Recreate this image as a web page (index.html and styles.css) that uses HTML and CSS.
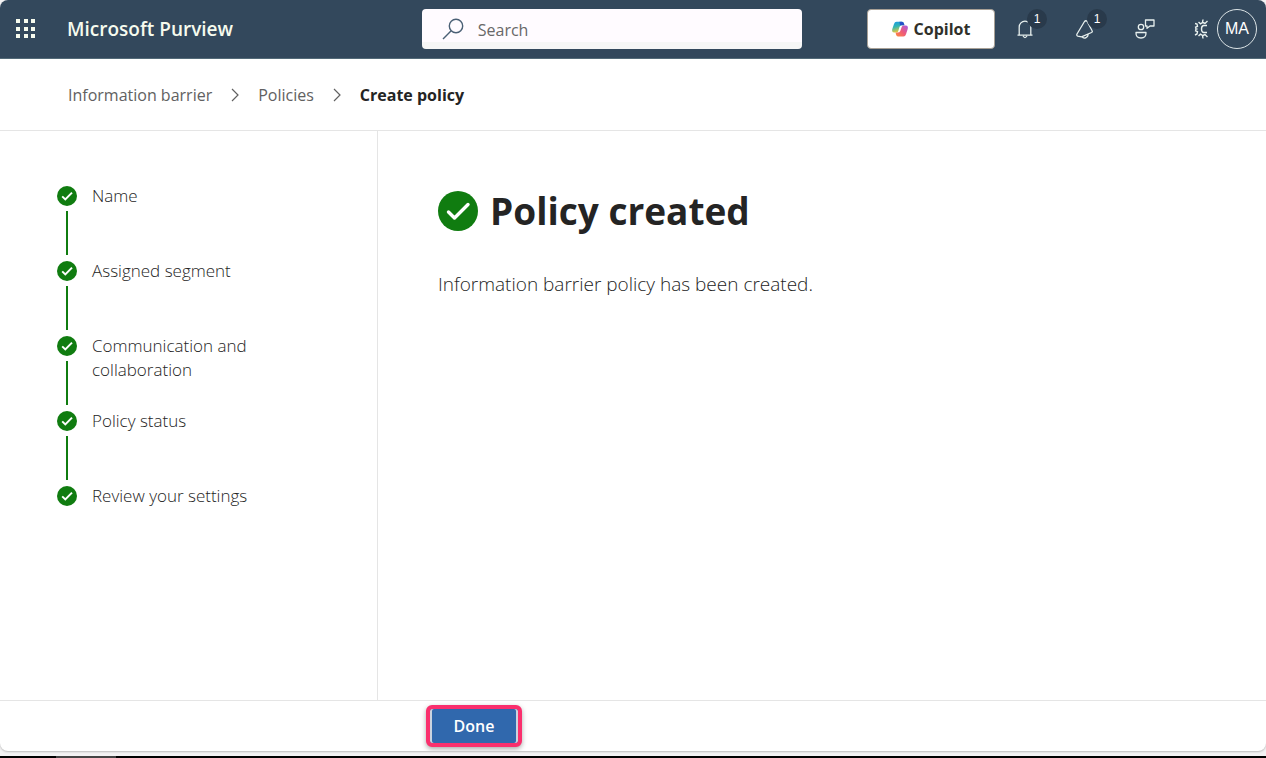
FILE: index.html
```html
<!DOCTYPE html>
<html lang="en">
<head>
<meta charset="utf-8">
<meta name="viewport" content="width=device-width, initial-scale=1">
<title>Create policy - Microsoft Purview</title>
<link rel="stylesheet" href="styles.css">
</head>
<body>
<svg class="defs" aria-hidden="true">
  <symbol id="check" viewBox="0 0 20 20">
    <circle cx="10" cy="10" r="10" fill="#107c10"/>
    <path d="M5.2 10.400 8.300 13.400 15 6.600" fill="none" stroke="#fff" stroke-width="2"/>
  </symbol>
  <symbol id="chevron" viewBox="0 0 8 14">
    <path d="M1 1 7 7 1 13" fill="none" stroke="#616161" stroke-width="1.200"/>
  </symbol>
</svg>
<div class="window">
  <header class="topbar">
    <div class="brand">
      <button class="icon-button" type="button" aria-label="App launcher">
        <svg width="20" height="20" viewBox="0 0 20 20" fill="#f6fbee">
          <path d="M0 0h4v4H0zM8 0h4v4H8zM15 0h4v4h-4zM0 8h4v4H0zM8 8h4v4H8zM15 8h4v4h-4zM0 15h4v4H0zM8 15h4v4H8zM15 15h4v4h-4z"/>
        </svg>
      </button>
      <a class="product" href="#">Microsoft Purview</a>
    </div>
    <label class="search">
      <svg width="22" height="22" viewBox="0 0 22 22" fill="none" stroke="#4a6075" stroke-width="1.400" aria-hidden="true">
        <circle cx="14" cy="8" r="6.700"/><path d="M9.200 12.800 1 21"/>
      </svg>
      <input type="search" placeholder="Search" aria-label="Search">
    </label>
    <div class="actions">
      <button class="copilot" type="button">
        <svg width="16" height="16" viewBox="0 0 16 16" aria-hidden="true">
          <defs>
            <linearGradient id="cool" x1="0" y1="0" x2="0.3" y2="1"><stop offset="0" stop-color="#1697e8"/><stop offset=".5" stop-color="#35b7b0"/><stop offset="1" stop-color="#e9c83a"/></linearGradient>
            <linearGradient id="warm" x1="1" y1="0" x2="0" y2="1"><stop offset="0" stop-color="#a35be8"/><stop offset=".5" stop-color="#ee5a79"/><stop offset="1" stop-color="#ff8a3c"/></linearGradient>
          </defs>
          <path d="M4.500 .8H10q1.500 0 2 2l.4 1.500H9.500Q8 4.300 7.500 6L6.300 10Q5.900 11.500 4.500 11.500H2Q-.5 11.500.3 8L2 3Q2.700.8 4.500.8Z" fill="url(#cool)"/>
          <path d="M7.500 .8H10q1.500 0 2 2l.4 1.500H9.500L8 4.600Z" fill="#2450c9"/>
          <path d="M11.500 15.500H6q-1.500 0-2-2l-.4-2H5Q7.600 11.700 8.300 10L9.700 6Q10.100 4.500 11.500 4.500H14q2.500 0 1.700 3.500L14 13.300q-.7 2.200-2.500 2.200Z" fill="url(#warm)"/>
        </svg>
        Copilot
      </button>
      <button class="icon-button badged" type="button" aria-label="Notifications, 1 new">
        <svg width="16" height="20" viewBox="0 0 16 20" fill="none" stroke="#e8f0ee" stroke-width="1.300">
          <path d="M.5 16.200H15.500M2.200 16V8a5.800 5.800 0 0 1 11.600 0v8M6 17q2 3 4 0"/>
        </svg>
        <span class="badge">1</span>
      </button>
      <button class="icon-button badged" type="button" aria-label="Announcements, 1 new">
        <svg width="18" height="20" viewBox="0 0 18 20" fill="none" stroke="#e8f0ee" stroke-width="1.300" stroke-linejoin="round">
          <path d="M8.500 2.500 1 15q-.7 1.600.8 2.200l3.700.6L15.500 13.500q1.300-.8.500-2L11 2.200q-1.300-1-2.500.3ZM6 17.700q1.500 2.200 4 1t2-3.700"/>
        </svg>
        <span class="badge">1</span>
      </button>
      <button class="icon-button" type="button" aria-label="Feedback">
        <svg width="20" height="20" viewBox="0 0 20 20" fill="none" stroke="#e8f0ee" stroke-width="1.300">
          <circle cx="6" cy="8" r="2.700"/><path d="M1 13.500h10q.3 5.500-5 5.500t-5-5.500ZM10.500 1h8.500v6h-4l-3 2.300V7h-1.500Z" stroke-linejoin="round"/>
        </svg>
      </button>
      <button class="icon-button settings" type="button" aria-label="Settings">
        <svg width="14" height="22" viewBox="0 0 14 22" fill="none" stroke="#e8f0ee" stroke-width="1.400">
          <path d="M1 5.500 3 6 3.500 8.300 1 9.500M1 12.500 3.500 13.700 3 16 1 17M4.500 4 6.500 5.800 8.500 4.500 9 1.500M4.500 18 6.500 16.200 8.500 17.500 9 20.500M9 4.500 11 5.500 13.500 3M9 17.500 11 16.500 13.500 19M13 7.500H9.500Q7.500 8 7.500 11T9.500 14.500H13M3.500 11H1"/>
        </svg>
      </button>
      <button class="avatar" type="button" aria-label="Account MA">MA</button>
    </div>
  </header>
  <nav class="breadcrumb" aria-label="Breadcrumb">
    <a href="#">Information barrier</a>
    <svg width="8" height="14" aria-hidden="true"><use href="#chevron"/></svg>
    <a href="#">Policies</a>
    <svg width="8" height="14" aria-hidden="true"><use href="#chevron"/></svg>
    <span class="current" aria-current="page">Create policy</span>
  </nav>
  <div class="wizard">
    <ol class="steps">
      <li class="step"><svg class="step-icon" aria-hidden="true"><use href="#check"/></svg><span>Name</span></li>
      <li class="step"><svg class="step-icon" aria-hidden="true"><use href="#check"/></svg><span>Assigned segment</span></li>
      <li class="step"><svg class="step-icon" aria-hidden="true"><use href="#check"/></svg><span>Communication and collaboration</span></li>
      <li class="step"><svg class="step-icon" aria-hidden="true"><use href="#check"/></svg><span>Policy status</span></li>
      <li class="step"><svg class="step-icon" aria-hidden="true"><use href="#check"/></svg><span>Review your settings</span></li>
    </ol>
    <main class="result">
      <div class="result-heading">
        <svg width="40" height="40" viewBox="0 0 40 40" aria-hidden="true">
          <circle cx="20" cy="20" r="20" fill="#107c10"/>
          <path d="M10.500 21 16.500 27 30 13.500" fill="none" stroke="#fff" stroke-width="3.400" stroke-linecap="round" stroke-linejoin="round"/>
        </svg>
        <h1>Policy created</h1>
      </div>
      <p>Information barrier policy has been created.</p>
    </main>
  </div>
  <footer class="footer">
    <button class="done" type="button">Done</button>
  </footer>
</div>
<div class="taskbar"></div>
</body>
</html>
```
FILE: styles.css
```css
* {
  box-sizing: border-box;
}

body {
  margin: 0;
  min-height: 100vh;
  display: flex;
  flex-direction: column;
  background: #f4f3f4;
  color: #242424;
  font: 16px/24px "Open Sans", "Noto Sans", sans-serif;
}

button,
input {
  font: inherit;
}

a {
  color: inherit;
  text-decoration: none;
}

.defs {
  position: absolute;
  width: 0;
  height: 0;
}

.window {
  flex: 1;
  display: flex;
  flex-direction: column;
  margin-bottom: 5px;
  border-radius: 8px;
  overflow: hidden;
  background: #fff;
  box-shadow: 0 1px 2px #bbb;
}

.topbar {
  display: grid;
  grid-template-columns: 9fr minmax(160px, 380px) 10fr;
  align-items: center;
  height: 59px;
  padding: 0 9px 0 12px;
  background: #33485c;
  border-bottom: 1px solid #536a78;
}

.brand {
  display: flex;
  align-items: center;
  gap: 27px;
}

.product {
  color: #f6fbee;
  font-size: 19px;
  font-weight: 600;
}

.icon-button {
  display: flex;
  justify-content: center;
  align-items: center;
  width: 28px;
  height: 32px;
  padding: 0;
  border: 0;
  background: none;
}

.search {
  display: flex;
  align-items: center;
  gap: 14px;
  height: 40px;
  padding: 0 20px;
  border-radius: 4px;
  background: linear-gradient(#fffbff 82%, #f6f6f6 82%);
}

.search input {
  flex: 1;
  min-width: 0;
  padding: 2px 0 0;
  border: 0;
  outline: 0;
  background: none;
}

.search input::placeholder {
  color: #686868;
  opacity: 1;
}

.actions {
  display: flex;
  justify-content: flex-end;
  align-items: center;
}

.actions .icon-button {
  margin-right: 32px;
}

.actions .settings {
  width: 14px;
  margin: 0 9px 0 3px;
}

.copilot {
  display: flex;
  justify-content: center;
  align-items: center;
  gap: 6px;
  width: 128px;
  height: 40px;
  margin-right: 16px;
  border: 1px solid #a8a095;
  border-radius: 4px;
  background: #fff;
  color: #30302a;
  font-weight: 700;
}

.badged {
  position: relative;
}

.badge {
  position: absolute;
  top: -4px;
  right: -8px;
  width: 20px;
  height: 20px;
  border-radius: 50%;
  background: #293a4b;
  color: #fff;
  font: 12px/20px "Liberation Sans", sans-serif;
}

.avatar {
  width: 40px;
  height: 40px;
  padding: 0;
  border: 1px solid #dce4e6;
  border-radius: 50%;
  background: none;
  color: #fff;
  font: 16px/24px "Liberation Sans", sans-serif;
}

.breadcrumb {
  display: flex;
  align-items: center;
  gap: 19px;
  height: 72px;
  padding: 0 68px;
  border-bottom: 1px solid #e5e5e5;
  color: #616161;
}

.current {
  color: #242424;
  font-weight: 700;
}

.wizard {
  flex: 1;
  display: flex;
}

.steps {
  width: 378px;
  margin: 0;
  padding: 53px 57px;
  border-right: 1px solid #e5e5e5;
  list-style: none;
  font-size: 17px;
  font-weight: 300;
}

.step {
  display: grid;
  grid-template-columns: 20px 168px;
  grid-template-rows: 24px 1fr;
  column-gap: 15px;
  min-height: 75px;
}

.step-icon {
  width: 20px;
  height: 20px;
  align-self: center;
}

.step span {
  grid-column: 2;
  grid-row: 1 / 3;
}

.step:not(:last-child)::after {
  content: "";
  grid-column: 1;
  grid-row: 2;
  justify-self: center;
  width: 2px;
  margin: 3px 0 4px;
  background: #107c10;
}

.result {
  flex: 1;
  padding: 54px 60px;
}

.result-heading {
  display: flex;
  align-items: center;
  gap: 12px;
}

h1 {
  margin: 0;
  color: #242424;
  font-size: 37px;
  line-height: 52px;
}

p {
  margin: 33px 0 0;
  font-size: 19px;
  font-weight: 300;
  line-height: 28px;
}

.footer {
  padding: 4px 426px;
  border-top: 1px solid #e5e5e5;
}

.done {
  display: block;
  width: 96px;
  height: 42px;
  border: 4px solid #fa2f6d;
  border-radius: 6px;
  background: #3068ad;
  color: #fff;
  font-weight: 600;
  box-shadow: inset 2px 0 #cad3df, inset -2px 0 #cad3df, 0 2px 5px #aaa;
}

.taskbar {
  height: 2px;
  background: linear-gradient(90deg, #000 56px, #444 56px, #444 116px, #000 116px);
}
```
